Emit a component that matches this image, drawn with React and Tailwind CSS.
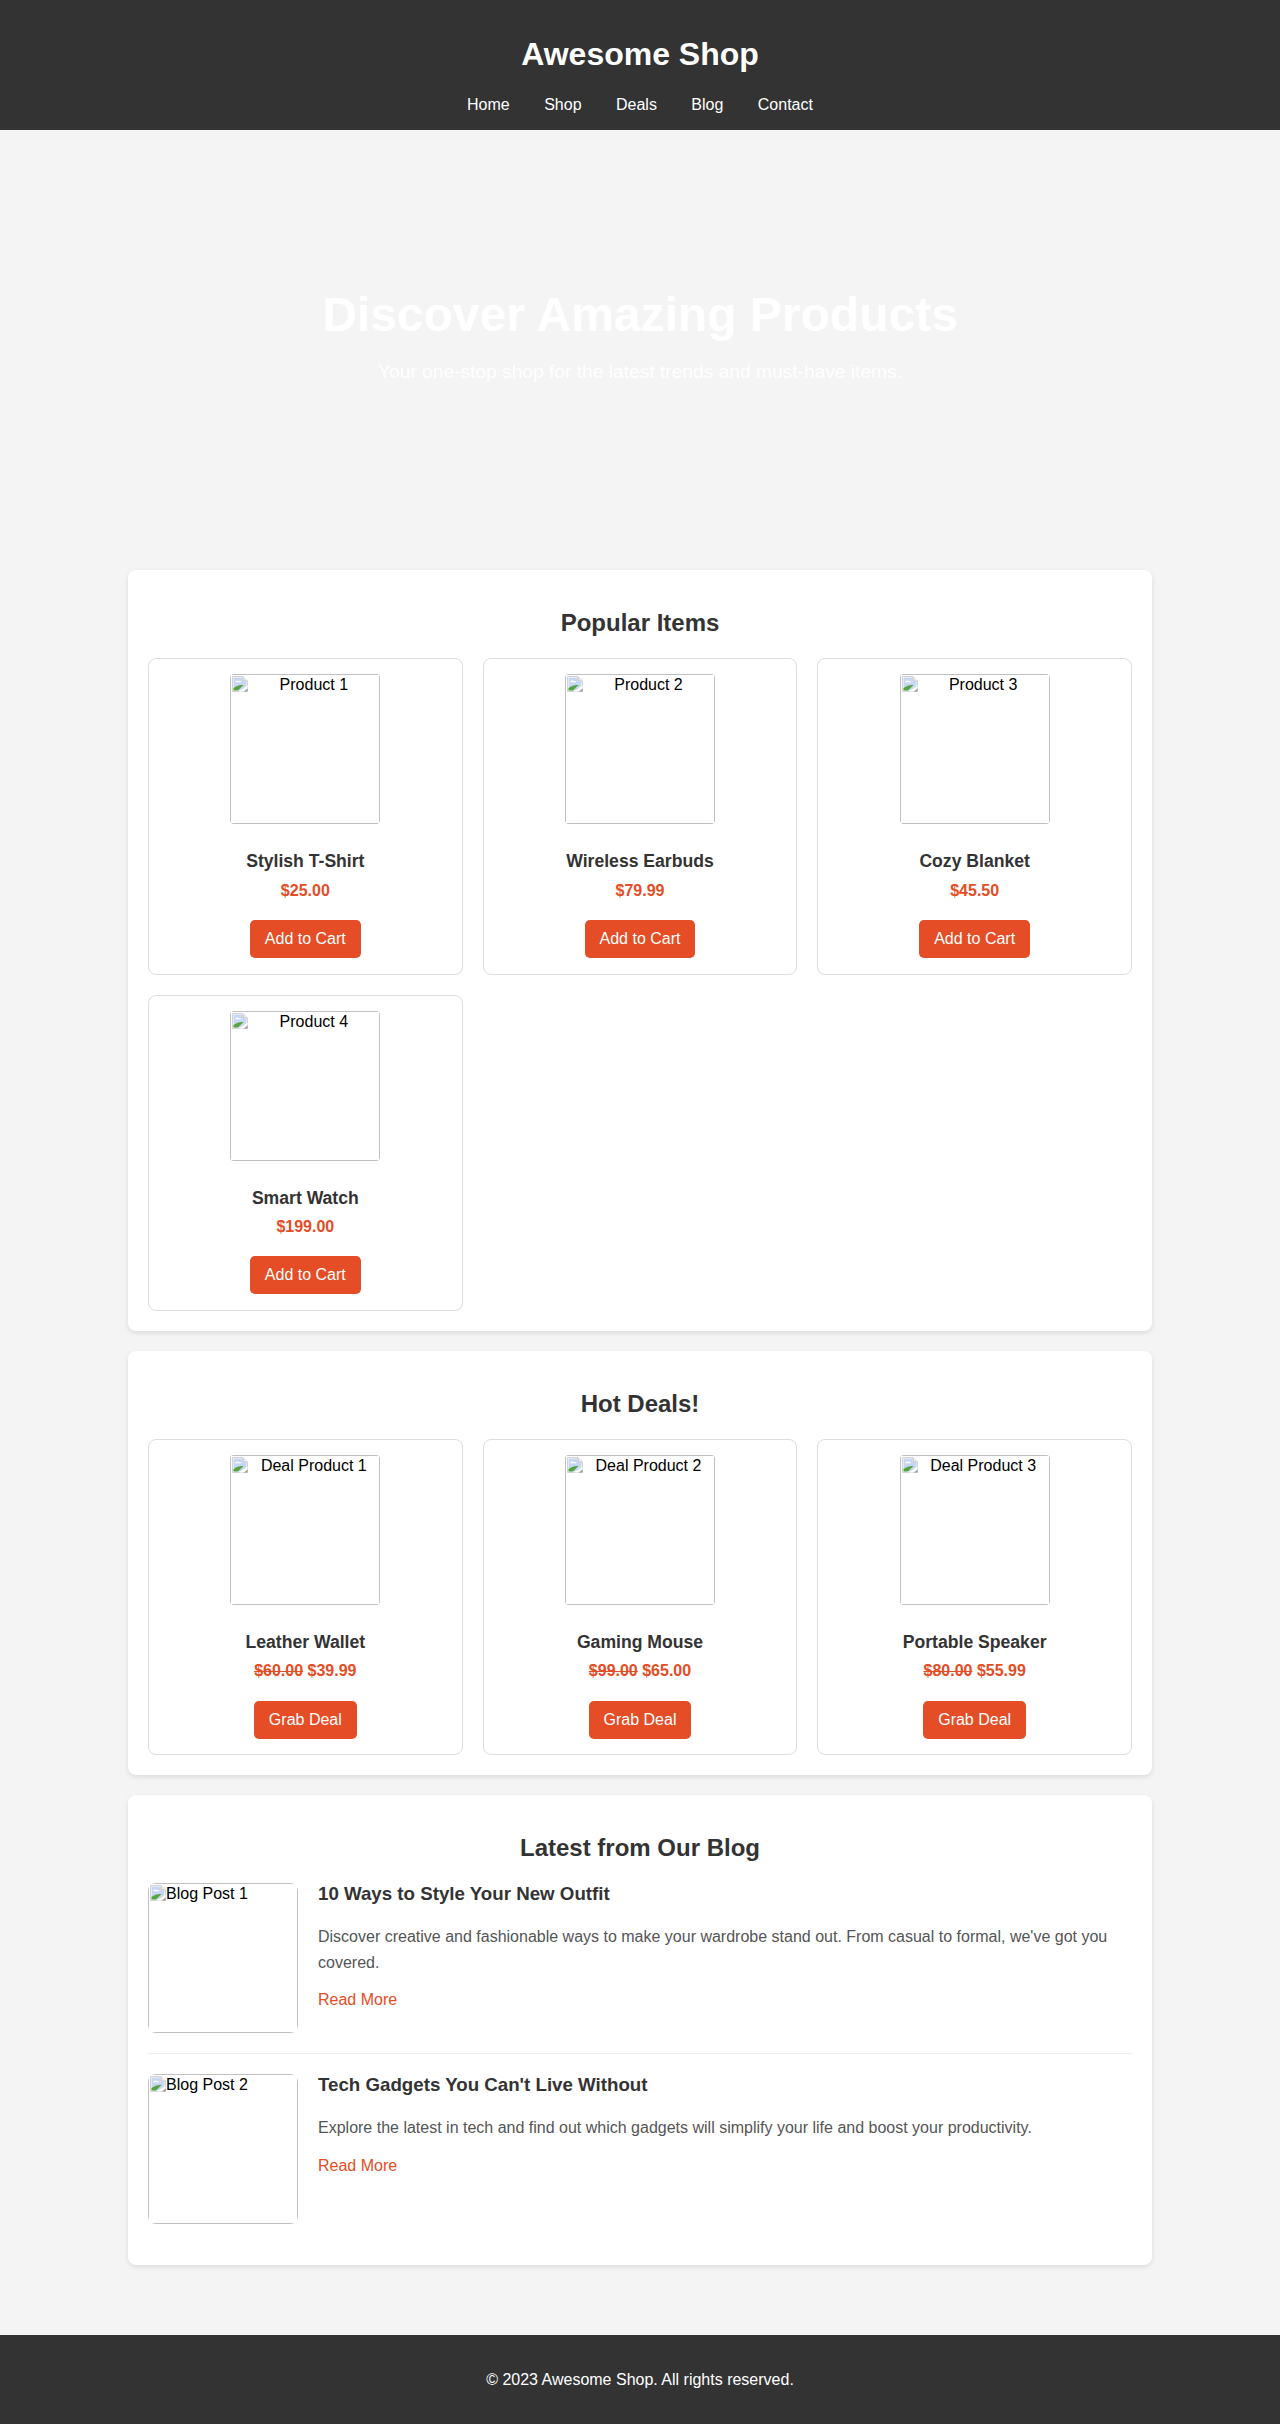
const NAV = ["Home", "Shop", "Deals", "Blog", "Contact"];

const POPULAR = [
  { alt: "Product 1", name: "Stylish T-Shirt", price: "$25.00" },
  { alt: "Product 2", name: "Wireless Earbuds", price: "$79.99" },
  { alt: "Product 3", name: "Cozy Blanket", price: "$45.50" },
  { alt: "Product 4", name: "Smart Watch", price: "$199.00" },
];

const DEALS = [
  { alt: "Deal Product 1", name: "Leather Wallet", was: "$60.00", price: "$39.99" },
  { alt: "Deal Product 2", name: "Gaming Mouse", was: "$99.00", price: "$65.00" },
  { alt: "Deal Product 3", name: "Portable Speaker", was: "$80.00", price: "$55.99" },
];

const POSTS = [
  {
    alt: "Blog Post 1",
    title: "10 Ways to Style Your New Outfit",
    text: "Discover creative and fashionable ways to make your wardrobe stand out. From casual to formal, we've got you covered.",
  },
  {
    alt: "Blog Post 2",
    title: "Tech Gadgets You Can't Live Without",
    text: "Explore the latest in tech and find out which gadgets will simplify your life and boost your productivity.",
  },
];

// the browser's broken image glyph
function BrokenIcon() {
  return (
    <svg width="16" height="16" viewBox="0 0 16 16" className="float-left block">
      <path d="M0.5 0.5H11L15.5 5V15.5H0.5Z" fill="#fff" stroke="#c8c8c8" strokeWidth="0.8" />
      <path d="M1.5 1.5H10.5V5.5H14.5V10.5L9 14.5H1.5Z" fill="#c6d6f5" />
      <path d="M3 6c1-2 3-2 4-.8.8-.3 2 0 2.2 1H3Z" fill="#fff" />
      <path d="M1.5 14.5V12C5 9.5 8 8.5 11.5 9L6 14.5Z" fill="#57a43c" />
      <path d="M7 15.5L15.5 9.5V12L11 15.5Z" fill="#fff" />
      <path d="M11 1V5H15" fill="#ececec" stroke="#a8a8a8" strokeWidth="0.6" />
      <path d="M12 15.5L15.5 12.5V15.5Z" fill="#9a9a9a" />
    </svg>
  );
}

function Picture({ alt, center }) {
  return (
    <div
      className={`w-[150px] h-[150px] shrink-0 overflow-hidden ${
        center ? "rounded-[4px] text-center mx-auto" : "rounded-lg text-left"
      }`}
    >
      <div className="h-full border border-[#c0c0c0] text-black text-[16px] leading-[18px] pt-px pl-px">
        <BrokenIcon />
        {alt}
      </div>
    </div>
  );
}

function Card({ item, label }) {
  return (
    <div className="border border-[#ddd] rounded-lg px-[15px] pt-[15px] pb-[15.5px] text-center">
      <Picture alt={item.alt} center />
      <h3 className="mt-[23px] text-[17.6px] leading-[28.16px] font-bold text-[#333]">{item.name}</h3>
      <p className="mt-[2px] text-[16px] leading-[26px] font-bold text-[#e44d26]">
        {item.was ? <span className="line-through">{item.was}</span> : null}
        {item.was ? " " : null}
        {item.price}
      </p>
      <button className="mt-[16.5px] block mx-auto bg-[#e44d26] text-white text-[16px] leading-[18px] px-[15px] py-[10px] rounded-[5px]">
        {label}
      </button>
    </div>
  );
}

function Section({ title, children }) {
  return (
    <section className="bg-white rounded-lg p-5 shadow-[0_2px_5px_rgba(0,0,0,0.1)]">
      <h2 className="mt-[14px] mb-[16px] text-center text-[24px] leading-[38.4px] font-bold text-[#333]">{title}</h2>
      {children}
    </section>
  );
}

export default function App() {
  return (
    <div className="bg-[#f4f4f4] text-[#333] text-[16px] leading-[25.6px] font-['Liberation_Sans',Arial,sans-serif]">
      <header className="h-[130px] bg-[#333] text-white text-center pt-[26px]">
        <h1 className="text-[32px] leading-[56px] font-bold">Awesome Shop</h1>
        <nav className="mt-[10px] flex justify-center gap-[34.45px]">
          {NAV.map((n) => (
            <a key={n} href="#" className="text-white">
              {n}
            </a>
          ))}
        </nav>
      </header>

      <div className="h-[400px] pt-[155px] text-center text-white">
        <h2 className="text-[48px] leading-[60px] font-bold">Discover Amazing Products</h2>
        <p className="mt-[12px] text-[19.2px] leading-[30px]">
          Your one-stop shop for the latest trends and must-have items.
        </p>
      </div>

      <main className="w-[1024px] mx-auto mt-10 flex flex-col gap-5">
        <Section title="Popular Items">
          <div className="grid grid-cols-3 gap-5">
            {POPULAR.map((p) => (
              <Card key={p.alt} item={p} label="Add to Cart" />
            ))}
          </div>
        </Section>

        <Section title="Hot Deals!">
          <div className="grid grid-cols-3 gap-5">
            {DEALS.map((d) => (
              <Card key={d.alt} item={d} label="Grab Deal" />
            ))}
          </div>
        </Section>

        <Section title="Latest from Our Blog">
          <div className="-mt-[0.5px] pb-[0.5px]">
            {POSTS.map((post, i) => (
              <article
                key={post.alt}
                className={`flex gap-5 pb-5 ${i < POSTS.length - 1 ? "border-b border-[#eee] mb-5" : ""}`}
              >
                <Picture alt={post.alt} />
                <div className="flex-1 min-w-0 pt-[1px]">
                  <h3 className="text-[18.72px] leading-[20px] font-bold text-[#333]">{post.title}</h3>
                  <p className="mt-[20px] text-[#555]">{post.text}</p>
                  <a href="#" className="block mt-[12px] text-[#e44d26]">
                    Read More
                  </a>
                </div>
              </article>
            ))}
          </div>
        </Section>
      </main>

      <footer className="mt-[70px] h-[89.32px] bg-[#333] text-white flex items-center justify-center">
        <p>© 2023 Awesome Shop. All rights reserved.</p>
      </footer>
    </div>
  );
}
